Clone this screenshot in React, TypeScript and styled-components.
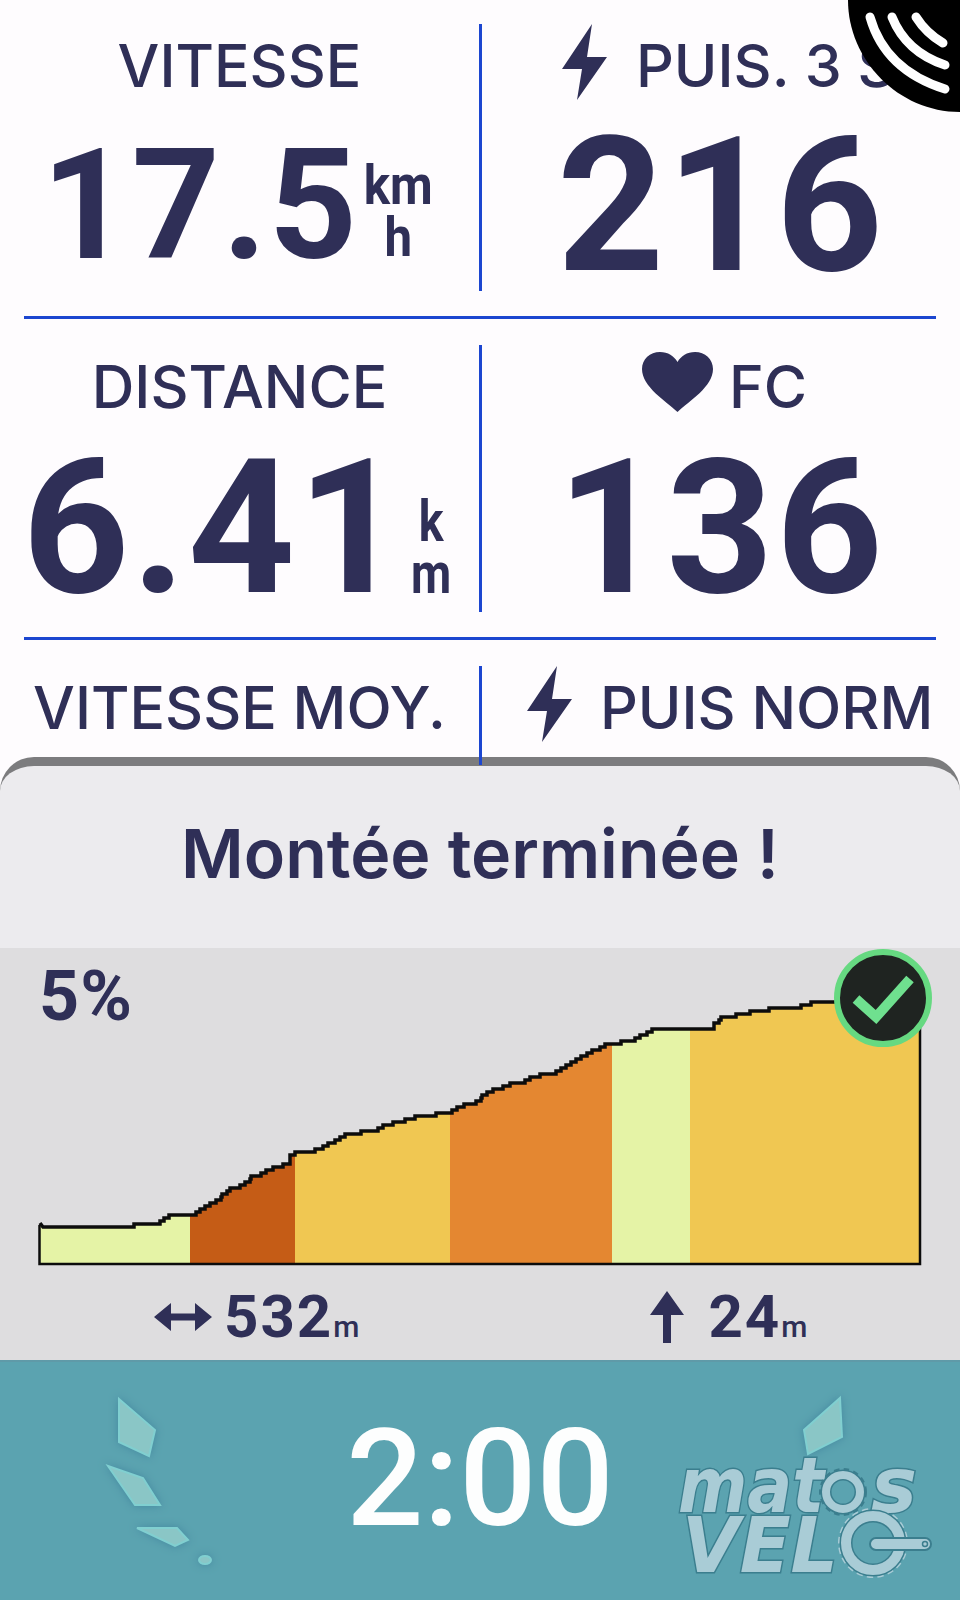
import React from "react";
import styled, { createGlobalStyle } from "styled-components";

const INK = "#2f2f57";
const BLUE = "#1c46d0";

const GlobalStyle = createGlobalStyle`
  html, body { margin: 0; padding: 0; background: #fefcfe; }
  * { box-sizing: border-box; }
`;

const Screen = styled.div`
  position: relative;
  width: 960px;
  height: 1600px;
  overflow: hidden;
  display: flex;
  flex-direction: column;
  padding-top: 24px;
  background: #fefcfe;
  color: ${INK};
  font-family: "Roboto", "Liberation Sans", sans-serif;
`;

const Row = styled.div<{ $h: number }>`
  position: relative;
  z-index: 1;
  flex: none;
  display: grid;
  grid-template-columns: 479px 3px 478px;
  grid-template-rows: ${(p) => p.$h}px;
`;

const VRule = styled.div`
  background: ${BLUE};
`;

const HRule = styled.div`
  flex: none;
  height: 3px;
  margin: 25px 24px 26px;
  background: ${BLUE};
`;

const Cell = styled.div`
  display: flex;
  flex-direction: column;
  min-width: 0;
  min-height: 0;
`;

const Label = styled.div<{ $inset?: number; $gap?: number }>`
  flex: none;
  height: 80px;
  display: flex;
  align-items: flex-end;
  gap: ${(p) => p.$gap ?? 0}px;
  justify-content: ${(p) => (p.$inset ? "flex-start" : "center")};
  padding-left: ${(p) => p.$inset ?? 0}px;
  font-family: "Inter", "Roboto", sans-serif;
  font-weight: 500;
  font-size: 59px;
  line-height: 76px;
  white-space: nowrap;
`;

const Bolt = styled.svg`
  flex: none;
  width: 46px;
  height: 76px;
  margin-bottom: 4px;
`;

const Heart = styled.svg`
  flex: none;
  width: 71px;
  height: 60px;
  margin-bottom: 13px;
`;

const ValueLine = styled.div<{ $top: number }>`
  flex: none;
  display: flex;
  justify-content: center;
  align-items: flex-start;
  margin-top: ${(p) => p.$top}px;
`;

const Value = styled.span<{ $size: number; $track: number }>`
  font-weight: 700;
  font-size: ${(p) => p.$size}px;
  letter-spacing: ${(p) => p.$track}px;
  line-height: 1;
`;

const Unit = styled.div<{ $top: number; $gap: number; $size: number; $squeeze: number }>`
  display: flex;
  flex-direction: column;
  align-items: center;
  margin-top: ${(p) => p.$top}px;
  gap: ${(p) => p.$gap}px;
  font-weight: 700;
  font-size: ${(p) => p.$size}px;
  line-height: 0.86;
  transform: scaleX(${(p) => p.$squeeze});
`;

const Panel = styled.div`
  position: relative;
  flex: none;
  height: 191px;
  margin-top: -8px;
  border-top: 9px solid #7c7c7e;
  border-radius: 34px 34px 0 0;
  background: #ecebee;
  display: flex;
  align-items: center;
  justify-content: center;
  font-family: "Inter", "Roboto", sans-serif;
  font-weight: 600;
  font-size: 68px;
  padding-bottom: 8px;
`;

const ChartBand = styled.div`
  position: relative;
  flex: none;
  height: 412px;
  background: #dedddf;
  display: flex;
  flex-direction: column;
`;

const Grade = styled.div`
  position: absolute;
  left: 39px;
  top: 13px;
  font-weight: 700;
  font-size: 70px;
  letter-spacing: 1px;
  line-height: 1;
`;

const Chart = styled.svg`
  display: block;
  flex: none;
`;

const Stats = styled.div`
  display: flex;
  align-items: flex-end;
  gap: 291px;
  padding: 21px 0 0 154px;
`;

const Stat = styled.div`
  display: flex;
  align-items: baseline;
  font-weight: 700;
  font-size: 60px;
  line-height: 1;
  letter-spacing: 2px;
`;

const StatUnit = styled.span`
  font-weight: 500;
  font-size: 30px;
  letter-spacing: 0;
`;

const StatIcon = styled.svg<{ $gap: number }>`
  flex: none;
  align-self: center;
  margin-right: ${(p) => p.$gap}px;
`;

const TimerBand = styled.div`
  position: relative;
  flex: 1;
  background: #5ba3b0;
  border-top: 2px solid #5f9aa8;
  display: flex;
  align-items: center;
  justify-content: center;
  padding-bottom: 4px;
`;

const Timer = styled.div`
  position: relative;
  font-weight: 500;
  font-size: 136px;
  line-height: 1;
  color: #fdfefe;
`;

const Decor = styled.svg`
  position: absolute;
  left: 0;
  top: 0;
`;

const Wing = styled.g`
  fill: #8ac6c6;
  stroke: #80cfd0;
  stroke-width: 2;
  filter: drop-shadow(0 0 4px #45889f);
`;

const LogoText = styled.g`
  fill: #a9ccd6;
  stroke: #3b7e8e;
  stroke-width: 3;
  paint-order: stroke;
  font-family: "DejaVu Sans", sans-serif;
  font-weight: 700;
  font-style: oblique;
`;

const SyncBadge = styled.svg`
  position: absolute;
  z-index: 2;
  top: 0;
  right: 0;
`;

const BoltIcon = () => (
  <Bolt viewBox="0 0 46 76">
    <path d="M30 0 L0 45 H20 L15 76 L45 33 H25 Z" fill={INK} />
  </Bolt>
);

const HeartIcon = () => (
  <Heart viewBox="0 0 71 60">
    <path
      d="M35.5 60 C24 49 0 35 0 17 C0 7 8 0 18 0 C26 0 32 4 35.5 10 C39 4 45 0 53 0 C63 0 71 7 71 17 C71 35 47 49 35.5 60 Z"
      fill={INK}
    />
  </Heart>
);

// profile of the climb, in page x and band-relative y
const profile: [number, number][] = [
  [43, 279], [130, 279], [134, 277], [141, 276], [150, 275], [160, 274], [164, 270],
  [170, 267], [191, 267], [200, 262], [211, 255], [222, 247], [230, 241], [240, 236], [251, 229],
  [268, 222], [285, 215], [290, 206], [295, 204], [318, 202], [330, 195], [346, 186], [373, 182],
  [395, 174], [416, 169], [447, 165], [459, 159], [471, 155], [482, 148], [493, 142], [505, 137],
  [520, 135], [535, 128], [551, 125], [566, 116], [582, 107], [595, 101], [606, 96], [630, 93],
  [642, 87], [655, 81], [709, 81], [714, 76], [721, 70], [740, 66], [759, 62], [796, 59], [817, 54], [860, 54],
];

// the device draws the curve in small pixel steps
const stepped = (pts: [number, number][]) => {
  const out: string[] = ["40,275", "43,279"];
  for (let i = 1; i < pts.length; i++) {
    const [x0, y0] = pts[i - 1];
    const [x1, y1] = pts[i];
    let prevY = Math.round(y0 / 3) * 3;
    for (let x = x0 + 5; x < x1 + 5; x += 5) {
      const cx = Math.min(x, x1);
      const y = Math.round((y0 + ((y1 - y0) * (cx - x0)) / (x1 - x0)) / 3) * 3;
      if (y !== prevY) out.push(`${cx},${prevY}`, `${cx},${y}`);
      prevY = y;
    }
    out.push(`${x1},${prevY}`);
  }
  return out.join(" ");
};

const line = stepped(profile);
const BASE = 316;

const segments = [
  { x: 40, w: 150, c: "#e5f3a6" },
  { x: 190, w: 105, c: "#c55c16" },
  { x: 295, w: 155, c: "#f0c752" },
  { x: 450, w: 162, c: "#e48731" },
  { x: 612, w: 78, c: "#e5f3a6" },
  { x: 690, w: 230, c: "#f0c752" },
];

const ClimbChart = () => (
  <Chart width={960} height={318} viewBox="0 0 960 318">
    <defs>
      <clipPath id="climb-area">
        <polygon points={`${line} 920,54 920,${BASE} 40,${BASE}`} />
      </clipPath>
    </defs>
    <g clipPath="url(#climb-area)">
      {segments.map((s) => (
        <rect key={s.x} x={s.x} y={0} width={s.w} height={BASE} fill={s.c} />
      ))}
    </g>
    <polyline points={line} fill="none" stroke="#0c0c0c" strokeWidth={3.5} />
    <path d={`M39.5 277 V${BASE} H920 V60`} fill="none" stroke="#0c0c0c" strokeWidth={2.5} />
    <circle cx={883} cy={50} r={46} fill="#1f2421" stroke="#66d981" strokeWidth={6} />
    <path d="M856 51 L876 69 L910 31" fill="none" stroke="#6fe08f" strokeWidth={10} />
  </Chart>
);

const Wings = () => (
  <Decor width={960} height={240} viewBox="0 1362 960 240">
    <Wing>
      <polygon points="119,1399 155,1430 149,1456 119,1442" />
      <polygon points="108,1466 143,1478 160,1505 135,1505" />
      <polygon points="137,1528 177,1528 188,1540 175,1546" />
      <ellipse cx={205} cy={1560} rx={6} ry={4} />
      <polygon points="840,1398 842,1437 808,1454 804,1430" />
    </Wing>
    <LogoText>
      <text x={678} y={1512} fontSize={76} textLength={146} lengthAdjust="spacingAndGlyphs">mat</text>
      <text x={871} y={1512} fontSize={76} textLength={46} lengthAdjust="spacingAndGlyphs">s</text>
      <text x={682} y={1572} fontSize={76} textLength={156} lengthAdjust="spacingAndGlyphs">VEL</text>
    </LogoText>
    <circle cx={843} cy={1492} r={21} fill="none" stroke="#3b7e8e" strokeWidth={6} strokeDasharray="5 4" />
    <circle cx={843} cy={1492} r={17} fill="#5ba3b0" fillOpacity={0.8} stroke="#3b7e8e" strokeWidth={11} />
    <circle cx={843} cy={1492} r={17} fill="none" stroke="#a9ccd6" strokeWidth={8} />
    <circle cx={873} cy={1543} r={32} fill="none" stroke="#a9ccd6" strokeWidth={6} strokeDasharray="6 4" />
    <circle cx={873} cy={1543} r={27} fill="#5ba3b0" stroke="#3b7e8e" strokeWidth={13} />
    <circle cx={873} cy={1543} r={27} fill="none" stroke="#a9ccd6" strokeWidth={10} />
    <rect x={870} y={1538} width={61} height={12} rx={6} fill="#a9ccd6" stroke="#3b7e8e" strokeWidth={2} />
    <circle cx={925} cy={1544} r={2.5} fill="none" stroke="#3b7e8e" strokeWidth={1.5} />
  </Decor>
);

const App: React.FC = () => {
  return (
    <Screen>
      <GlobalStyle />
      <SyncBadge width={112} height={112} viewBox="0 0 112 112">
        <path d="M0 0 H112 V112 C50 112 0 60 0 0 Z" fill="#000" />
        <g fill="none" stroke="#fff" strokeWidth={9} strokeLinecap="round">
          <path d="M22 17 Q37 70 97 89" />
          <path d="M44 17 Q58 52 97 65" />
          <path d="M68 17 Q78 33 95 43" />
        </g>
      </SyncBadge>

      <Row $h={267}>
        <Cell>
          <Label>VITESSE</Label>
          <ValueLine $top={25}>
            <Value $size={154} $track={2}>17.5</Value>
            <Unit $top={32} $gap={4} $size={56} $squeeze={0.88}>
              <span>km</span>
              <span>h</span>
            </Unit>
          </ValueLine>
        </Cell>
        <VRule />
        <Cell>
          <Label $inset={80} $gap={28}>
            <BoltIcon />
            PUIS. 3 S
          </Label>
          <ValueLine $top={9}>
            <Value $size={187} $track={2}>216</Value>
          </ValueLine>
        </Cell>
      </Row>
      <HRule />
      <Row $h={267}>
        <Cell>
          <Label>DISTANCE</Label>
          <ValueLine $top={10}>
            <Value $size={187} $track={2}>6.41</Value>
            <Unit $top={62} $gap={2} $size={58} $squeeze={0.8}>
              <span>k</span>
              <span>m</span>
            </Unit>
          </ValueLine>
        </Cell>
        <VRule />
        <Cell>
          <Label $inset={160} $gap={16}>
            <HeartIcon />
            FC
          </Label>
          <ValueLine $top={10}>
            <Value $size={187} $track={2}>136</Value>
          </ValueLine>
        </Cell>
      </Row>
      <HRule />
      <Row $h={99}>
        <Cell>
          <Label>VITESSE MOY.</Label>
        </Cell>
        <VRule />
        <Cell>
          <Label $inset={45} $gap={27}>
            <BoltIcon />
            PUIS NORM
          </Label>
        </Cell>
      </Row>

      <Panel>Montée terminée !</Panel>

      <ChartBand>
        <Grade>5%</Grade>
        <ClimbChart />
        <Stats>
          <Stat>
            <StatIcon $gap={12} width={58} height={34} viewBox="0 0 58 34">
              <path d="M0 17 L17 3 V13.5 H41 V3 L58 17 L41 31 V20.5 H17 V31 Z" fill={INK} />
            </StatIcon>
            532<StatUnit>m</StatUnit>
          </Stat>
          <Stat>
            <StatIcon $gap={24} width={34} height={52} viewBox="0 0 34 52">
              <path d="M17 0 L34 24 H21 V52 H13 V24 H0 Z" fill={INK} />
            </StatIcon>
            24<StatUnit>m</StatUnit>
          </Stat>
        </Stats>
      </ChartBand>

      <TimerBand>
        <Wings />
        <Timer>2:00</Timer>
      </TimerBand>
    </Screen>
  );
};

export default App;
